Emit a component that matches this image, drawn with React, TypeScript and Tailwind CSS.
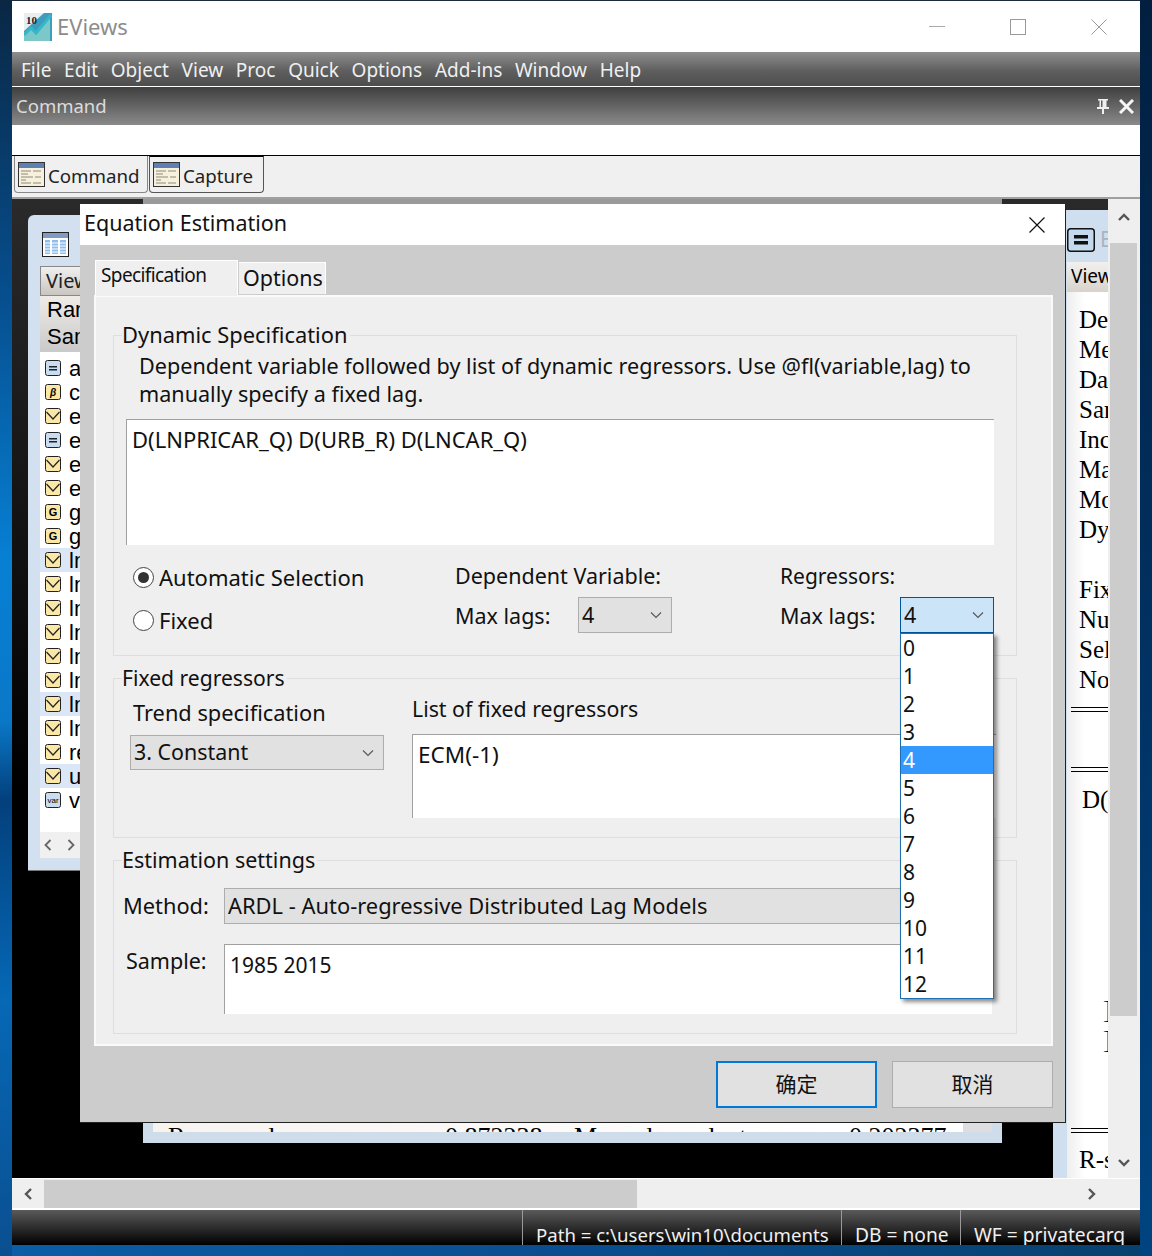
const ui = { fontFamily: '"Noto Sans", "Noto Sans CJK SC", sans-serif' };

const menus = ["File", "Edit", "Object", "View", "Proc", "Quick", "Options", "Add-ins", "Window", "Help"];
const lags = ["0", "1", "2", "3", "4", "5", "6", "7", "8", "9", "10", "11", "12"];

type Kind = "eq" | "beta" | "series" | "g" | "var";
const rows: { kind: Kind; name: string; hi?: boolean }[] = [
  { kind: "eq", name: "a" },
  { kind: "beta", name: "c" },
  { kind: "series", name: "e" },
  { kind: "eq", name: "e" },
  { kind: "series", name: "e" },
  { kind: "series", name: "e" },
  { kind: "g", name: "g" },
  { kind: "g", name: "g" },
  { kind: "series", name: "ln", hi: true },
  { kind: "series", name: "ln" },
  { kind: "series", name: "ln" },
  { kind: "series", name: "ln" },
  { kind: "series", name: "ln" },
  { kind: "series", name: "ln" },
  { kind: "series", name: "ln", hi: true },
  { kind: "series", name: "ln" },
  { kind: "series", name: "re" },
  { kind: "series", name: "u", hi: true },
  { kind: "var", name: "v" },
];

const rightLines = ["Dependent", "Method", "Date", "Sample", "Included", "Maximum", "Model", "Dynamic", "\u00a0", "Fixed", "Number", "Selected", "Note"];

function Chevron({ color = "#555" }: { color?: string }) {
  return (
    <svg width="12" height="8" viewBox="0 0 12 8" fill="none" stroke={color} strokeWidth="1.1">
      <path d="M1 1.5 L6 6.5 L11 1.5" />
    </svg>
  );
}

function ScrollArrow({ d }: { d: string }) {
  return (
    <svg width="14" height="14" viewBox="0 0 14 14" fill="none" stroke="#555" strokeWidth="2.4">
      <path d={d} />
    </svg>
  );
}

function TabIcon() {
  return (
    <svg width="27" height="25" viewBox="0 0 27 25" className="shrink-0">
      <rect x="0.5" y="0.5" width="26" height="24" fill="#f7f1dc" stroke="#333" />
      <rect x="1" y="1" width="25" height="5" fill="#5f7fb5" />
      <path d="M3 9h10M15 9h8M3 12h7M3 15h12M17 15h6M3 18h5M3 21h10M15 21h8" stroke="#8a8a80" strokeWidth="1" />
    </svg>
  );
}

function TableIcon() {
  return (
    <svg width="27" height="25" viewBox="0 0 27 25">
      <rect x="0.5" y="0.5" width="26" height="24" fill="#fff" stroke="#222" />
      <rect x="1" y="1" width="25" height="5" fill="#7f9cc4" />
      <path d="M3 8h5v14h-5zM10 8h6v14h-6zM18 8h6v14h-6z" fill="#8fbcec" />
      <path d="M2 11h23M2 14h23M2 17h23M2 20h23" stroke="#fff" strokeWidth="1" />
    </svg>
  );
}

function ObjIcon({ kind }: { kind: Kind }) {
  const blue = kind === "eq" || kind === "var";
  return (
    <svg width="16" height="16" viewBox="0 0 16 16" className="shrink-0">
      <rect x="0.5" y="0.5" width="15" height="15" rx="2" fill={blue ? "#c8dcf2" : "#fbe8a6"} stroke="#222" />
      {kind === "series" && <path d="M1.5 4 L8 11 L14.5 4" fill="none" stroke="#222" strokeWidth="1.2" />}
      {kind === "eq" && <path d="M4 6h8v1.5h-8zM4 9h8v1.5h-8z" fill="#222" />}
      {kind === "beta" && (
        <text x="8" y="12" textAnchor="middle" fontSize="10" fontWeight="700" fontStyle="italic" fontFamily="Liberation Sans">
          β
        </text>
      )}
      {kind === "g" && (
        <text x="8" y="12" textAnchor="middle" fontSize="11" fontWeight="700" fontFamily="Liberation Sans">
          G
        </text>
      )}
      {kind === "var" && (
        <text x="8" y="11" textAnchor="middle" fontSize="8" fontFamily="Liberation Sans">
          var
        </text>
      )}
    </svg>
  );
}

function Logo() {
  return (
    <svg width="28" height="28" viewBox="0 0 28 28">
      <rect width="28" height="28" fill="#3f9cbc" />
      <path d="M0 0h20L0 18z" fill="#e8edf0" />
      <path d="M0 28V20l7-6 5 5L26 2v26z" fill="#7cc8c8" />
      <path d="M0 22l7-7 5 5L27 2" fill="none" stroke="#34b7c9" strokeWidth="3" />
      <text x="2" y="11" fontSize="11" fontWeight="700" fill="#223" fontFamily="Liberation Serif">
        10
      </text>
    </svg>
  );
}

function Group({ legend, size, className, children }: { legend: string; size: string; className: string; children: React.ReactNode }) {
  return (
    <div className={`relative border border-[#dedede] ${className}`}>
      <span className={`absolute left-[8px] top-[-16px] bg-[#efefef] pr-[2px] leading-[30px] ${size}`}>{legend}</span>
      {children}
    </div>
  );
}

function Select({ value, className }: { value: string; className: string }) {
  return (
    <div className={`flex items-center justify-between border border-[#adadad] bg-[#e1e1e1] pl-[3px] pr-[9px] ${className}`}>
      <span>{value}</span>
      <Chevron />
    </div>
  );
}

function Radio({ label, on }: { label: string; on?: boolean }) {
  return (
    <div className="flex h-[38px] items-center gap-[5px] pl-px text-[22px]">
      <span className="flex h-[21px] w-[21px] items-center justify-center rounded-full border border-[#444] bg-white">
        {on && <span className="h-[11px] w-[11px] rounded-full bg-[#333]" />}
      </span>
      {label}
    </div>
  );
}

function LeftWindow() {
  return (
    <div className="absolute left-[16px] top-[16px] flex h-[656px] w-[200px] flex-col rounded-tl-[6px] border-b border-[#777] bg-[#d3e0ef] pl-[12px]">
      <div className="flex h-[51px] shrink-0 items-end pb-[9px] pl-[2px]">
        <TableIcon />
      </div>
      <div className="h-[30px] w-[60px] shrink-0 border border-[#888] bg-[linear-gradient(#f0f0f0,#c9c5c0)] pl-[5px] text-[20px] leading-[28px] text-[#222]">
        View
      </div>
      <div className="h-[56px] shrink-0 bg-[linear-gradient(#efece8,#c9c9c9)] pl-[7px] text-[22px] leading-[27px]" style={{ fontFamily: "Liberation Sans" }}>
        <div>Range</div>
        <div>Sample</div>
      </div>
      <div className="h-[480px] shrink-0 bg-white pt-[4px]" style={{ fontFamily: "Liberation Sans" }}>
        {rows.map((row, i) => (
          <div key={i} className={`flex h-[24px] items-center gap-[8px] pl-[5px] text-[22px] ${row.hi ? "bg-[#dbe7f6]" : ""}`}>
            <ObjIcon kind={row.kind} />
            {row.name}
          </div>
        ))}
      </div>
      <div className="flex h-[26px] shrink-0 items-center gap-[15px] bg-[#f0f0f0] pl-[4px] text-[#666]">
        <svg width="8" height="12" viewBox="0 0 8 12" fill="none" stroke="#666" strokeWidth="1.8">
          <path d="M6.5 1 L1.5 6 L6.5 11" />
        </svg>
        <svg width="8" height="12" viewBox="0 0 8 12" fill="none" stroke="#666" strokeWidth="1.8">
          <path d="M1.5 1 L6.5 6 L1.5 11" />
        </svg>
      </div>
    </div>
  );
}

function CenterWindow() {
  return (
    <div className="absolute left-[131px] top-0 flex h-[944px] w-[859px] flex-col justify-end bg-[linear-gradient(#9a9a9a_0,#9a9a9a_5px,#cfdcea_5px)]">
      <div className="mb-[11px] ml-[10px] mr-[10px] flex h-[31px] overflow-hidden whitespace-nowrap bg-[linear-gradient(90deg,#f7f4f0,#fff_80%,#fff_96.5%,#dedede_96.5%)] pl-[15px] pt-[22px] text-[26px] leading-[28px]" style={{ fontFamily: "Liberation Serif" }}>
        <span className="w-[277px] shrink-0">R-squared</span>
        <span className="w-[129px] shrink-0">0.872238</span>
        <span className="w-[275px] shrink-0">Mean dependent var</span>
        <span>0.202377</span>
      </div>
    </div>
  );
}

function RightWindow() {
  return (
    <div className="absolute left-[1041px] top-[11px] flex h-[968px] w-[60px] flex-col bg-[#cfdfef]">
      <div className="flex h-[52px] shrink-0 items-center pl-[14px] pt-[8px]">
        <svg width="28" height="24" viewBox="0 0 28 24" className="shrink-0">
          <rect x="0.75" y="0.75" width="26.5" height="22.500" rx="3" fill="#c4d8ee" stroke="#111" strokeWidth="1.5" />
          <path d="M7 7h14v3.500h-14zM7 13h14v3.500h-14z" fill="#111" />
        </svg>
        <span className="pl-[5px] text-[21px] text-[#aab4be]">E</span>
      </div>
      <div className="ml-[14px] h-[30px] shrink-0 bg-[linear-gradient(#f2f0ee,#d8d2cc)] pl-[4px] text-[19px] leading-[28px]">View</div>
      <div className="ml-[14px] flex-1 whitespace-nowrap bg-[linear-gradient(90deg,#eeeeee,#ffffff_40%)] pl-[12px] pt-[13px] text-[25px] leading-[30px]" style={{ fontFamily: "Liberation Serif" }}>
        {rightLines.map((line, i) => (
          <div key={i}>{line}</div>
        ))}
        <div className="-ml-[8px] mt-[12px] h-[5px] border-y border-black" />
        <div className="-ml-[8px] mt-[55px] h-[5px] border-y border-black" />
        <div className="mt-[13px] pl-[3px]">D(LNCAR_Q)</div>
        <div className="mt-[180px] pl-[24px]">]</div>
        <div className="pl-[24px]">]</div>
        <div className="-ml-[8px] mt-[73px] h-[5px] border-y border-black" />
        <div className="mt-[12px]">R-squared</div>
      </div>
    </div>
  );
}

function Dialog() {
  return (
    <div className="absolute left-[68px] top-[5px] flex h-[919px] w-[986px] flex-col border-b border-r border-[#222] bg-[#cccccc] text-[#111]" style={ui}>
      <div className="flex h-[41px] shrink-0 items-center justify-between bg-white pb-[3px] pl-[4px] pr-[20px] text-[21.5px]">
        <span>Equation Estimation</span>
        <svg width="16" height="16" viewBox="0 0 16 16" stroke="#111" strokeWidth="1.2" className="mt-[3px]">
          <path d="M0.5 0.5 L15.500 15.500 M15.500 0.5 L0.5 15.500" />
        </svg>
      </div>
      <div className="flex flex-1 flex-col pl-[14px] pr-[12px] pt-[15px]">
        <div className="relative z-10 flex h-[35px] items-start pl-px">
          <div className="h-[36px] w-[143px] border-x border-t border-white bg-[#efefef] pl-[5px] text-[19px] leading-[29px] tracking-[-0.6px]">Specification</div>
          <div className="ml-px mt-[2px] h-[32px] w-[87px] border-r border-t border-white bg-[#efefef] pl-[4px] text-[21.5px] leading-[30px]">Options</div>
        </div>
        <div className="h-[751px] shrink-0 border-2 border-[#fafafa] bg-[#efefef] pl-[17px] pt-[38px]">
          <Group legend="Dynamic Specification" size="text-[21.9px]" className="h-[321px] w-[904px] pt-[16px]">
            <p className="pl-[25px] text-[21.6px] leading-[28px]">
              Dependent variable followed by list of dynamic regressors. Use @fl(variable,lag) to
              <br />
              manually specify a fixed lag.
            </p>
            <div className="ml-[12px] mt-[11px] h-[126px] w-[868px] border-l border-t border-[#a0a0a0] bg-white pl-[5px] pt-[3px] text-[22px]">
              D(LNPRICAR_Q) D(URB_R) D(LNCAR_Q)
            </div>
            <div className="mt-[14px] flex pl-[18px]">
              <div className="-mt-px flex w-[323px] flex-col gap-[5px]">
                <Radio label="Automatic Selection" on />
                <Radio label="Fixed" />
              </div>
              <div className="w-[325px] text-[21.5px]">
                <div className="h-[34px] leading-[34px]">Dependent Variable:</div>
                <div className="mt-[4px] flex items-center">
                  <span className="w-[123px] pt-[3px]">Max lags:</span>
                  <Select value="4" className="h-[36px] w-[94px]" />
                </div>
              </div>
              <div className="text-[21.5px]">
                <div className="h-[34px] text-[21px] leading-[34px]">Regressors:</div>
                <div className="relative mt-[4px] flex items-center">
                  <span className="w-[120px] pt-[3px]">Max lags:</span>
                  <div className="flex h-[36px] w-[94px] items-center justify-between border border-[#005499] bg-[#cce4f7] pl-[3px] pr-[9px]">
                    <span>4</span>
                    <Chevron />
                  </div>
                  <div className="absolute left-[120px] top-[36px] z-20 w-[94px] border border-[#1f6fb0] bg-white shadow-[3px_3px_4px_rgba(0,0,0,0.45)]">
                    {lags.map((n) => (
                      <div key={n} className={`h-[28px] pl-[2px] text-[21px] leading-[28px] ${n === "4" ? "bg-[#3399ff] text-white" : ""}`}>
                        {n}
                      </div>
                    ))}
                  </div>
                </div>
              </div>
            </div>
          </Group>
          <Group legend="Fixed regressors" size="text-[21.100px]" className="mt-[22px] flex h-[160px] w-[904px] pl-[16px]">
            <div className="w-[282px] pt-[20px]">
              <div className="h-[28px] pl-[3px] text-[21.800px] leading-[28px]">Trend specification</div>
              <Select value="3. Constant" className="mt-[8px] h-[35px] w-[254px] text-[21.400px]" />
            </div>
            <div className="pt-[16px]">
              <div className="h-[28px] text-[21.300px] leading-[28px]">List of fixed regressors</div>
              <div className="mt-[11px] h-[84px] w-[584px] border-l border-t border-[#a0a0a0] bg-white pl-[5px] pt-[3px] text-[22.500px]">ECM(-1)</div>
            </div>
          </Group>
          <Group legend="Estimation settings" size="text-[21.500px]" className="mt-[22px] h-[174px] w-[904px] pt-[27px]">
            <div className="flex items-center pl-[9px]">
              <span className="w-[101px] text-[21.800px]">Method:</span>
              <Select value="ARDL - Auto-regressive Distributed Lag Models" className="h-[36px] w-[770px] text-[21.900px]" />
            </div>
            <div className="mt-[20px] flex items-start pl-[12px]">
              <span className="w-[98px] pt-[1px] text-[21.500px]">Sample:</span>
              <div className="h-[70px] w-[768px] border-l border-t border-[#a0a0a0] bg-white pl-[5px] pt-[5px] text-[21px]">1985 2015</div>
            </div>
          </Group>
        </div>
        <div className="flex justify-end gap-[15px] pt-[15px] text-[21px]">
          <div className="flex h-[47px] w-[161px] items-center justify-center border-2 border-[#0078d7] bg-[#e1e1e1]">确定</div>
          <div className="flex h-[47px] w-[161px] items-center justify-center border border-[#adadad] bg-[#e1e1e1]">取消</div>
        </div>
      </div>
    </div>
  );
}

export default function App() {
  return (
    <div className="flex h-[1256px] w-[1152px] overflow-hidden bg-[#0a4d8f]" style={ui}>
      <div className="w-[12px] shrink-0 bg-[linear-gradient(#0a2744_0,#064f8f_300px,#0780d4_560px,#0a78c8_720px,#03407c_800px,#0668b6_1000px,#0a4f90_1256px)]" />
      <div className="flex w-[1128px] shrink-0 flex-col">
        <div className="h-px shrink-0 bg-[#1d2b3a]" />
        <div className="flex h-[51px] shrink-0 items-center justify-between bg-white pl-[12px] pr-[33px]">
          <div className="flex items-center gap-[5px] text-[22px] text-[#8c8c8c]">
            <Logo />
            EViews
          </div>
          <div className="flex items-center gap-[65px]">
            <div className="h-px w-[16px] bg-[#aaa]" />
            <div className="h-[16px] w-[16px] border border-[#999]" />
            <svg width="16" height="16" viewBox="0 0 16 16" stroke="#999" strokeWidth="1">
              <path d="M0.5 0.5 L15.500 15.500 M15.500 0.5 L0.5 15.500" />
            </svg>
          </div>
        </div>
        <div className="flex h-[34px] shrink-0 items-center gap-[12.700px] bg-[linear-gradient(#8e8e8e,#5f5f5f_55%,#4d4d4d)] pl-[9px] pt-[2px] text-[19px] text-[#f0f0f0]">
          {menus.map((m) => (
            <span key={m}>{m}</span>
          ))}
        </div>
        <div className="flex h-[39px] shrink-0 items-center justify-between border-t border-white bg-[linear-gradient(#3f3f3f,#8a8a8a)] pl-[4px] pr-[6px] text-[18.500px] text-[#dcdcdc]">
          <span>Command</span>
          <div className="flex items-center gap-[9px]">
            <svg width="14" height="15" viewBox="0 0 14 15" fill="#f0f0f0">
              <path d="M2 0h10v1.500h-1.500v6.500h2.500v2h-5v5h-2v-5h-5v-2h2.500v-6.500h-1.500zM5 1.500v6.500h1.500v-6.500z" />
            </svg>
            <svg width="15" height="15" viewBox="0 0 15 15" stroke="#f5f5f5" strokeWidth="3">
              <path d="M1 1 L14 14 M14 1 L1 14" />
            </svg>
          </div>
        </div>
        <div className="h-[31px] shrink-0 border-b border-black bg-white" />
        <div className="flex h-[43px] shrink-0 items-start border-b-2 border-[#a0a0a0] bg-[#f0f0f0] pl-[2px] text-[18.700px] text-[#222]">
          <div className="flex h-[37px] w-[134px] items-center gap-[3px] rounded-b-[4px] border-x border-b border-[#888] pl-[3px]">
            <TabIcon />
            <span className="pt-[4px]">Command</span>
          </div>
          <div className="ml-px flex h-[37px] w-[115px] items-center gap-[3px] rounded-b-[4px] border border-[#555] border-t-black pl-[3px]">
            <TabIcon />
            <span className="pt-[4px]">Capture</span>
          </div>
        </div>
        <div className="flex h-[979px] shrink-0">
          <div className="relative w-[1096px] shrink-0 overflow-hidden bg-[linear-gradient(#2a2a2a,#000_60%)]">
            <LeftWindow />
            <CenterWindow />
            <RightWindow />
            <Dialog />
          </div>
          <div className="flex w-[32px] shrink-0 flex-col items-center bg-[#efefef]">
            <div className="flex h-[44px] items-center justify-center pb-[8px]">
              <ScrollArrow d="M2 10 L7 5 L12 10" />
            </div>
            <div className="h-[773px] w-[27px] -translate-x-px bg-[#cccccc]" />
            <div className="mt-auto flex h-[30px] items-center justify-center">
              <ScrollArrow d="M2 4 L7 9 L12 4" />
            </div>
          </div>
        </div>
        <div className="flex h-[30px] shrink-0 items-center border-t border-white bg-[#efefef]">
          <div className="flex w-[32px] shrink-0 items-center justify-center">
            <ScrollArrow d="M10 2 L5 7 L10 12" />
          </div>
          <div className="h-[28px] w-[593px] bg-[#cccccc]" />
          <div className="ml-auto mr-[28px] flex w-[40px] items-center justify-center">
            <ScrollArrow d="M4 2 L9 7 L4 12" />
          </div>
        </div>
        <div className="flex h-[37px] shrink-0 justify-end overflow-hidden whitespace-nowrap border-t-2 border-white bg-[linear-gradient(#5a5a5a,#000)] text-[19.200px] leading-[50px] text-[#f0f0f0]">
          <div className="w-[319px] border-l border-[#999] pl-[13px] text-[18.600px]">Path = c:\users\win10\documents</div>
          <div className="w-[119px] border-l border-[#999] pl-[13px]">DB = none</div>
          <div className="w-[180px] border-l border-[#999] pl-[13px]">WF = privatecarq</div>
        </div>
        <div className="flex-1 bg-[linear-gradient(90deg,#0a5da6,#0a4d8f_50%,#07416f)]" />
      </div>
      <div className="w-[12px] shrink-0 bg-[linear-gradient(#021f40,#00305f_600px,#004480)]" />
    </div>
  );
}
